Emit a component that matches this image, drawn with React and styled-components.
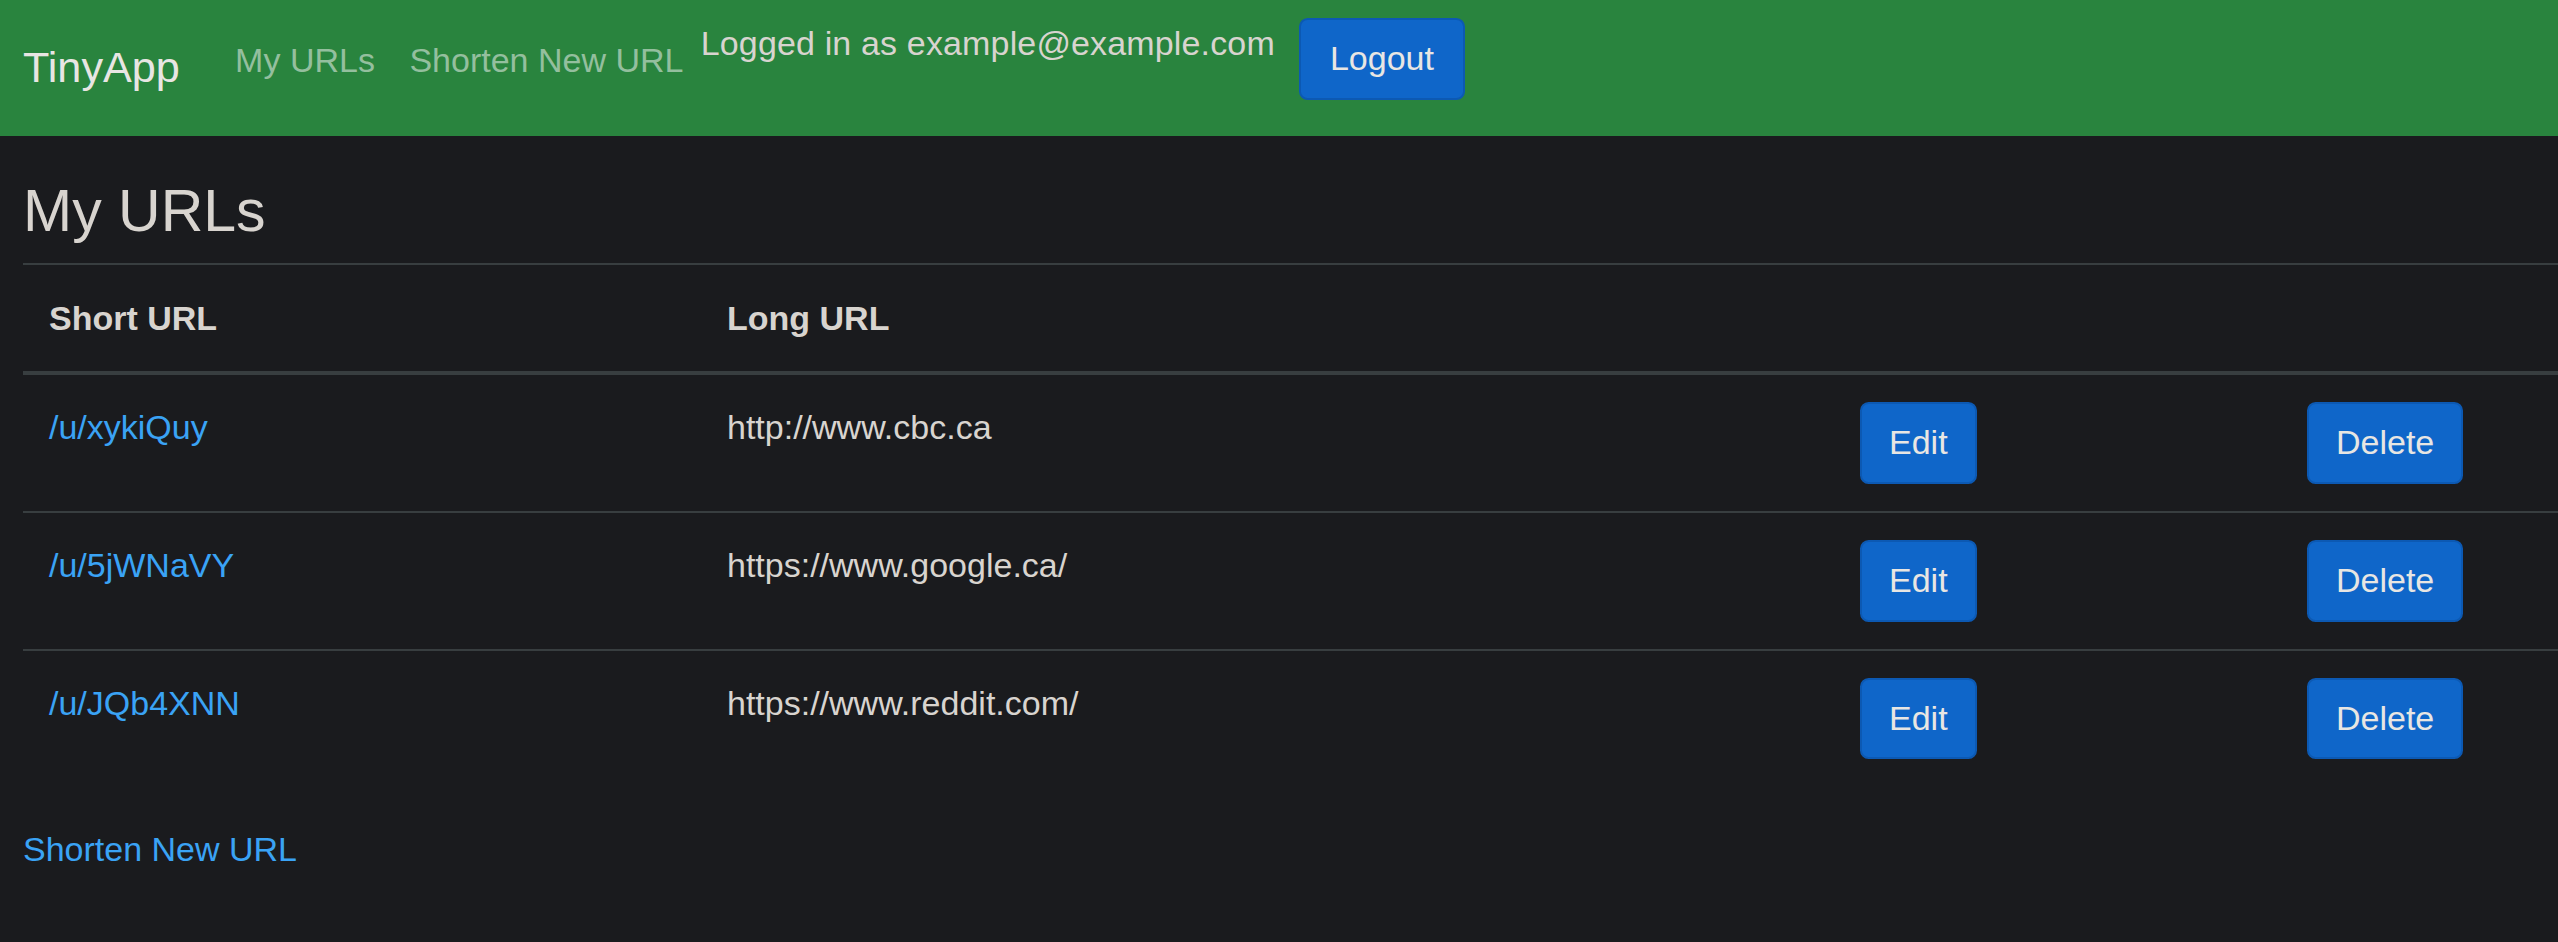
import React from "react";
import styled, { createGlobalStyle } from "styled-components";

const urls = [
  { id: "xykiQuy", longURL: "http://www.cbc.ca" },
  { id: "5jWNaVY", longURL: "https://www.google.ca/" },
  { id: "JQb4XNN", longURL: "https://www.reddit.com/" },
];

const GlobalStyle = createGlobalStyle`
  body {
    margin: 0;
    background-color: #1a1b1e;
    color: #d8d4cf;
    font-family: "Liberation Sans", Arial, sans-serif;
    font-size: 34px;
    line-height: 51.84px;
  }
`;

const App = () => {
  return (
    <>
      <GlobalStyle />
      <Navbar>
        <Brand href="#">TinyApp</Brand>
        <NavList>
          <NavLink href="#">My URLs</NavLink>
          <NavLink href="#">Shorten New URL</NavLink>
          <UserInfo>Logged in as example@example.com</UserInfo>
          <LogoutForm onSubmit={(e) => e.preventDefault()}>
            <Button type="submit" $nav>
              Logout
            </Button>
          </LogoutForm>
        </NavList>
      </Navbar>
      <Main>
        <Title>My URLs</Title>
        <Table>
          <colgroup>
            <col style={{ width: "678px" }} />
            <col style={{ width: "1133px" }} />
            <col style={{ width: "447px" }} />
            <col />
          </colgroup>
          <thead>
            <tr>
              <Th>Short URL</Th>
              <Th>Long URL</Th>
              <Th />
              <Th />
            </tr>
          </thead>
          <tbody>
            {urls.map((url) => (
              <tr key={url.id}>
                <Td>
                  <Link href="#">/u/{url.id}</Link>
                </Td>
                <Td>{url.longURL}</Td>
                <Td>
                  <Button type="button">Edit</Button>
                </Td>
                <Td>
                  <Button type="button">Delete</Button>
                </Td>
              </tr>
            ))}
          </tbody>
        </Table>
        <Link href="#">Shorten New URL</Link>
      </Main>
    </>
  );
};

export default App;

const Navbar = styled.nav`
  height: 136px;
  box-sizing: border-box;
  padding: 18px 23px 0;
  background-color: #29843e;
  display: flex;
  align-items: flex-start;
`;

const Brand = styled.a`
  font-size: 43.2px;
  line-height: 64.8px;
  padding-top: 17px;
  margin-right: 38px;
  color: #e8e6e3;
  text-decoration: none;
  white-space: nowrap;
`;

const NavList = styled.div`
  display: flex;
  align-items: flex-start;
`;

const NavLink = styled.a`
  padding: 17.28px;
  color: #94bf9e;
  text-decoration: none;
  white-space: nowrap;
`;

const UserInfo = styled.span`
  color: #d8d4cf;
  white-space: nowrap;
  letter-spacing: 0.15px;
`;

const LogoutForm = styled.form`
  margin: 0;
`;

const Button = styled.button`
  font-family: inherit;
  font-size: 34px;
  line-height: 51.84px;
  padding: 13px ${(p) => (p.$nav ? "29px" : "27px")};
  margin-left: ${(p) => (p.$nav ? "24px" : "0")};
  color: #e8e6e3;
  background-color: #0f66c9;
  border: 2px solid #0c59b3;
  border-radius: 8.6px;
  cursor: pointer;
`;

const Main = styled.main`
  padding: 39px 0 40px 23px;
`;

const Title = styled.h3`
  margin: 0 0 16px;
  font-size: 59px;
  line-height: 72px;
  font-weight: 500;
  color: #d8d4cf;
`;

const Table = styled.table`
  width: 100%;
  table-layout: fixed;
  border-collapse: collapse;
  margin-bottom: 38px;
`;

const Th = styled.th`
  text-align: left;
  font-weight: 700;
  padding: 28px 26px 26px;
  border-top: 2px solid #383e40;
  border-bottom: 4px solid #383e40;
  vertical-align: bottom;
`;

const Td = styled.td`
  padding: 27px 26px;
  border-top: 2px solid #383e40;
  vertical-align: top;
  white-space: nowrap;
`;

const Link = styled.a`
  color: #3aa3f5;
  text-decoration: none;
`;
